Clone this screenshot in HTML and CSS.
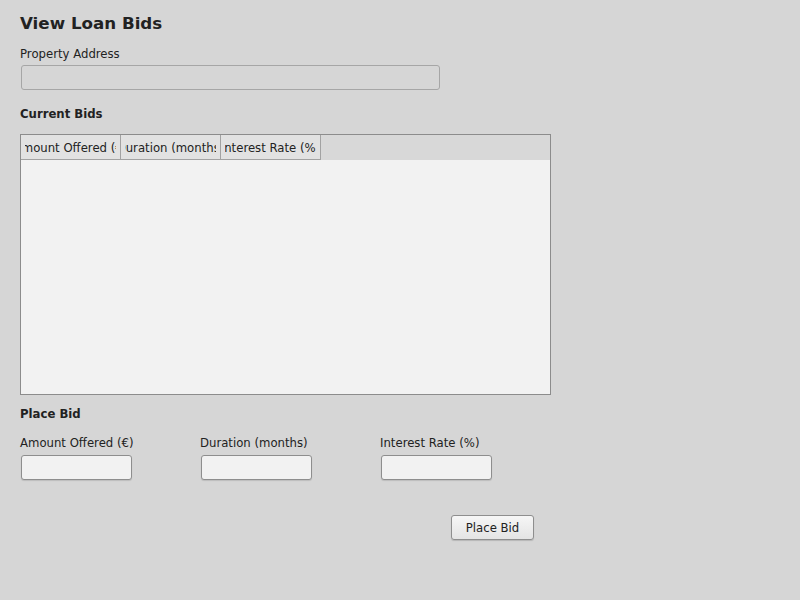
FILE: index.html
```html
<!DOCTYPE html>
<html>
<head>
<meta charset="utf-8">
<link rel="stylesheet" href="styles.css">
</head>
<body>
<div class="page">
  <h1 class="title">View Loan Bids</h1>
  <label class="label">Property Address</label>
  <div class="field wide readonly"></div>
  <h2 class="section">Current Bids</h2>
  <div class="table">
    <div class="thead">
      <div class="th"><div class="clip"><span>Amount Offered (€)</span></div></div>
      <div class="th"><div class="clip"><span>Duration (months)</span></div></div>
      <div class="th"><div class="clip"><span>Interest Rate (%)</span></div></div>
    </div>
    <div class="tbody"></div>
  </div>
  <h2 class="section bid">Place Bid</h2>
  <div class="bidrow">
    <div class="col">
      <label class="label">Amount Offered (€)</label>
      <div class="field small"></div>
    </div>
    <div class="col">
      <label class="label">Duration (months)</label>
      <div class="field small"></div>
    </div>
    <div class="col">
      <label class="label">Interest Rate (%)</label>
      <div class="field small"></div>
    </div>
  </div>
  <div class="actions">
    <button class="btn">Place Bid</button>
  </div>
</div>
</body>
</html>
```

FILE: styles.css
```css
html, body {
  margin: 0;
  padding: 0;
  background: #d6d6d6;
  font-family: "DejaVu Sans", sans-serif;
  color: #222222;
}
.page {
  width: 800px;
  height: 600px;
  box-sizing: border-box;
  padding: 13px 0 0 20px;
  display: flex;
  flex-direction: column;
  align-items: flex-start;
}
.title {
  margin: 0;
  font-size: 16.7px;
  line-height: 20px;
  font-weight: bold;
}
.label {
  display: block;
  font-size: 11.7px;
  line-height: 14px;
  white-space: nowrap;
}
.page > .label {
  margin-top: 14px;
}
.field {
  box-sizing: border-box;
  height: 25px;
  border: 1px solid #8e8e8e;
  border-radius: 3px;
  background: #f2f2f2;
  box-shadow: 0 1px 1px rgba(0,0,0,0.12);
  margin-left: 1px;
}
.wide {
  width: 419px;
  margin-top: 4px;
}
.readonly {
  background: #d6d6d6;
  border-color: #a6a6a6;
  box-shadow: none;
}
.section {
  margin: 17px 0 0 0;
  font-size: 11.7px;
  line-height: 14px;
  font-weight: bold;
}
.table {
  margin-top: 13px;
  box-sizing: border-box;
  width: 531px;
  height: 261px;
  border: 1px solid #8c8c8c;
  display: flex;
  flex-direction: column;
}
.thead {
  display: flex;
  height: 25px;
  background: #d8d8d8;
  flex: none;
}
.th {
  box-sizing: border-box;
  width: 100px;
  height: 25px;
  border-right: 1px solid #a2a2a2;
  border-bottom: 1px solid #a2a2a2;
  background: #e2e2e2;
  display: flex;
  align-items: center;
  padding: 1px 4px 0 4px;
}
.clip {
  width: 100%;
  display: flex;
  justify-content: center;
  overflow: hidden;
  font-size: 11.7px;
  line-height: 14px;
  white-space: nowrap;
}
.clip span {
  flex: none;
}
.tbody {
  flex: 1;
  background: #f2f2f2;
}
.section.bid {
  margin-top: 12px;
}
.bidrow {
  display: flex;
  margin-top: 15px;
}
.col {
  width: 180px;
}
.small {
  width: 111px;
  margin-top: 5px;
}
.actions {
  width: 514px;
  display: flex;
  justify-content: flex-end;
  margin-top: 35px;
}
.btn {
  box-sizing: border-box;
  width: 83px;
  height: 25px;
  border: 1px solid #8e8e8e;
  border-radius: 3px;
  background: linear-gradient(#f6f6f6, #e4e4e4);
  box-shadow: 0 1px 1px rgba(0,0,0,0.15);
  font-family: "DejaVu Sans", sans-serif;
  font-size: 11.7px;
  color: #222222;
  padding: 0;
}
```
